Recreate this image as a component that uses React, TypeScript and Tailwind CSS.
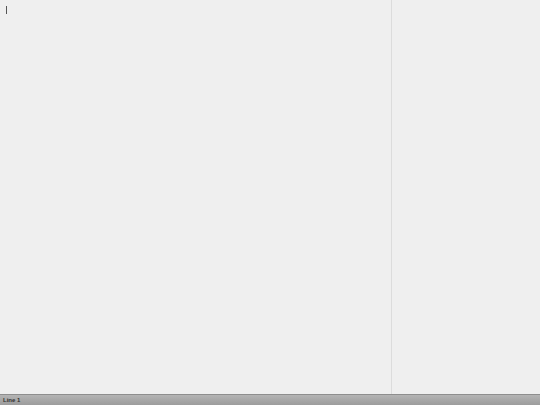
import React from "react";

const App: React.FC = () => {
  return (
    <div className="flex h-[405px] w-[540px] flex-col overflow-hidden bg-[#efefef] font-['Liberation_Sans',sans-serif]">
      {/* Editor area */}
      <div className="flex min-h-0 flex-1">
        <div className="w-[392px] border-r border-[#dcdcdc]">
          <div className="ml-[6px] mt-[6px] h-[8px] w-px bg-[#555]" />
        </div>
        <div className="flex-1" />
      </div>

      {/* Status bar */}
      <div className="flex h-[11px] items-center border-t border-[#8e8e8e] bg-gradient-to-b from-[#b4b4b4] to-[#9c9c9c] px-[3px]">
        <span className="text-[6px] font-bold leading-none text-[#333]">Line 1</span>
      </div>
    </div>
  );
};

export default App;
